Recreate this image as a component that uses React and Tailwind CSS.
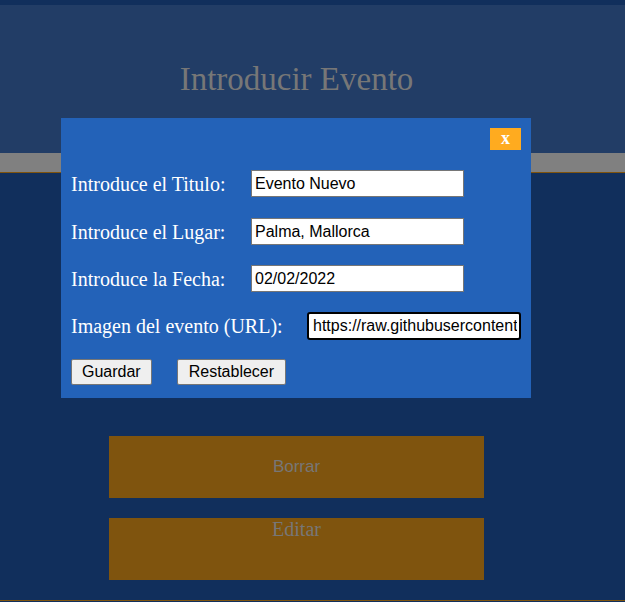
import { useState } from 'react';

function Fila({ label, value, labelWidth, focused, className }) {
    return (
        <div className={`flex items-center h-[27px] ${className}`}>
            <label className={`${labelWidth} text-white text-[20px] font-['Liberation_Serif',serif] leading-none`}>{label}</label>
            <input
                type="text"
                defaultValue={value}
                className={`h-[27px] bg-white text-black text-[16px] font-['Liberation_Sans',Arial,sans-serif] ${focused ? 'border-2 border-black rounded-[3px] outline-none h-[28px] w-[214px] pl-[4px] pr-[2px]' : 'w-[213px] px-[3px] border border-[#767676]'}`}
            />
        </div>
    );
}

function App() {
    const [abierto, setAbierto] = useState(true);

    return (
        <div className="relative w-[625px] h-[602px] overflow-hidden bg-[#112f5c] font-['Liberation_Serif',serif]">
            <div className="h-[5px] bg-[#112f5c]"></div>
            <header className="h-[148px] bg-[#223d66] flex items-center">
                <h1 className="w-[593px] text-center text-[#777777] text-[33px] font-['Liberation_Serif',serif] leading-none">Introducir Evento</h1>
            </header>
            <div className="h-[20px] bg-[#808080] border-b border-[#7f540e]"></div>

            <main className="h-[428px] border-b border-[#7f540e] pt-[263px]">
                <button className="block ml-[109px] w-[375px] h-[62px] bg-[#7f540e] text-[#777777] text-[17px] font-['Liberation_Sans',Arial,sans-serif]">
                    Borrar
                </button>
                <button className="ml-[109px] mt-[20px] w-[375px] h-[62px] bg-[#7f540e] text-[#777777] text-[20px] leading-none font-['Liberation_Serif',serif] flex justify-center items-start pt-[1px]">
                    Editar
                </button>
            </main>

            {abierto && (
                <div className="absolute left-[61px] top-[118px] w-[470px] h-[280px] bg-[#2362b8] px-[10px] pt-[10px]">
                    <div className="flex justify-end">
                        <button
                            onClick={() => setAbierto(false)}
                            className="w-[31px] h-[22px] bg-[#ffab1f] text-white text-[18px] font-bold font-['Liberation_Serif',serif] leading-none pb-[2px]"
                        >
                            x
                        </button>
                    </div>
                    <Fila className="mt-[20px]" label="Introduce el Titulo:" value="Evento Nuevo" labelWidth="w-[180px]" />
                    <Fila className="mt-[21px]" label="Introduce el Lugar:" value="Palma, Mallorca" labelWidth="w-[180px]" />
                    <Fila className="mt-[20px]" label="Introduce la Fecha:" value="02/02/2022" labelWidth="w-[180px]" />
                    <Fila className="mt-[20px]" label="Imagen del evento (URL):" value="https://raw.githubusercontent.com/imagen.jpg" labelWidth="w-[236px]" focused />
                    <div className="flex gap-[25px] mt-[20px]">
                        <button className="h-[26px] px-[10px] bg-[#efefef] border border-[#767676] rounded-[2px] text-black text-[16px] font-['Liberation_Sans',Arial,sans-serif]">Guardar</button>
                        <button className="h-[26px] px-[11px] bg-[#efefef] border border-[#767676] rounded-[2px] text-black text-[16px] font-['Liberation_Sans',Arial,sans-serif]">Restablecer</button>
                    </div>
                </div>
            )}
        </div>
    );
}

export default App;
